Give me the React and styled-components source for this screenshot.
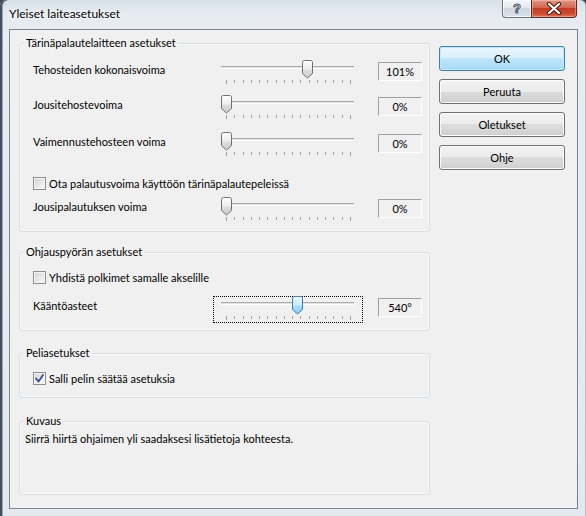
import React from "react";
import styled, { createGlobalStyle } from "styled-components";

const GlobalStyle = createGlobalStyle`
  html, body { margin: 0; padding: 0; }
  body {
    width: 586px;
    height: 516px;
    overflow: hidden;
    font-family: Lato, "Liberation Sans", sans-serif;
    font-size: 11px;
    color: #000;
    background: #3b4656;
  }
  * { box-sizing: border-box; }
`;

const Window = styled.div`
  width: 586px;
  height: 516px;
  display: flex;
  flex-direction: column;
  padding: 0 8px 7px 9px;
  background: linear-gradient(180deg, #d7dfe8 0px, #e6ebf1 14px, #e9edf2 40px, #e4e9ef 100%);
  box-shadow: inset 2px 0 0 #44505f, inset 3px 0 0 #9aa6b3, inset -1px 0 0 #b8c2cc;
  border-radius: 6px 6px 0 0;
`;

const TitleBar = styled.div`
  height: 29px;
  flex: none;
  display: flex;
  justify-content: space-between;
  align-items: flex-start;
`;

const Title = styled.div`
  padding-top: 6px;
  line-height: 16px;
  font-size: 12px;
  color: #000;
  text-shadow: 0 0 6px #fff, 0 0 3px #fff;
`;

const Captions = styled.div`
  display: flex;
  margin-right: 1px;
`;

const HelpButton = styled.div`
  width: 29px;
  height: 18px;
  border: 1px solid #6c7582;
  border-right: none;
  border-top: none;
  border-radius: 0 0 0 4px;
  background: linear-gradient(180deg, #f3f6f9 0%, #e4e9ef 45%, #cdd5de 50%, #dbe1e8 100%);
  box-shadow: inset 0 0 0 1px rgba(255,255,255,0.7);
  display: flex;
  align-items: center;
  justify-content: center;
  font-family: "Liberation Sans", sans-serif;
  font-weight: bold;
  font-size: 13px;
  color: #f4f4f4;
  -webkit-text-stroke: 1px #555d66;
`;

const CloseButton = styled.div`
  width: 46px;
  height: 18px;
  border: 1px solid #5b2a24;
  border-top: none;
  border-radius: 0 0 4px 0;
  background: linear-gradient(180deg, #e39683 0%, #d4674f 45%, #c23d26 50%, #cc4a30 80%, #db7a5c 100%);
  box-shadow: inset 0 0 0 1px rgba(255,220,210,0.4);
  display: flex;
  align-items: center;
  justify-content: center;
`;

const Client = styled.div`
  flex: 1;
  display: flex;
  gap: 9px;
  padding: 6px 12px 13px 9px;
  background: #f0f0f0;
  border: 1px solid #7c8590;
`;

const LeftCol = styled.div`
  width: 411px;
  flex: none;
  display: flex;
  flex-direction: column;
`;

const ButtonCol = styled.div`
  width: 126px;
  flex: none;
  display: flex;
  flex-direction: column;
  gap: 8px;
  padding-top: 10px;
`;

const Button = styled.div`
  height: 25px;
  flex: none;
  border: 1px solid ${(p) => (p.$default ? "#3c7fb1" : "#707070")};
  border-radius: 3px;
  background: ${(p) =>
    p.$default
      ? "linear-gradient(180deg, #eaf6fd 0%, #d9f0fc 50%, #bee6fd 50%, #a7d9f5 100%)"
      : "linear-gradient(180deg, #f2f2f2 0%, #ebebeb 50%, #dddddd 50%, #cfcfcf 100%)"};
  box-shadow: inset 0 0 0 1px ${(p) => (p.$default ? "#c6e8f8" : "#fbfbfb")};
  display: flex;
  align-items: center;
  justify-content: center;
  font-size: 11px;
  color: #000;
`;

const GroupBox = styled.fieldset`
  margin: ${(p) => p.$mt || 0}px 0 0 0;
  padding: ${(p) => p.$pt}px 6px ${(p) => p.$pb}px 13px;
  border: 1px solid #d5dfe5;
  border-radius: 3px;
  min-width: 0;
  box-shadow: inset 0 0 0 1px rgba(255, 255, 255, 0.5);
  ${(p) => (p.$grow ? "flex: 1;" : "")}
`;

const Legend = styled.legend`
  padding: 0 2px;
  margin-left: -9px;
  line-height: 14px;
  font-size: 11px;
  color: #000;
`;

const SliderRow = styled.div`
  display: flex;
  align-items: flex-start;
  margin-top: ${(p) => p.$mt || 0}px;
`;

const RowLabel = styled.div`
  width: 180px;
  flex: none;
  line-height: 20px;
  white-space: nowrap;
`;

const SliderBox = styled.div`
  position: relative;
  width: 150px;
  height: 27px;
  flex: none;
  border: 1px ${(p) => (p.$focused ? "dotted #000" : "solid transparent")};
`;

const Track = styled.div`
  position: absolute;
  left: 7px;
  right: 8px;
  top: 5px;
  height: 3px;
  border-top: 1px solid #a9a9a9;
  border-bottom: 1px solid #ffffff;
  background: #e3e3e3;
`;

const TickSvg = styled.svg`
  position: absolute;
  left: 0;
  top: 19px;
`;

const ThumbSvg = styled.svg`
  position: absolute;
  top: -1px;
`;

const ValueBox = styled.div`
  width: 44px;
  height: 19px;
  flex: none;
  margin-left: 15px;
  margin-top: 2px;
  border: 1px solid;
  border-color: #a0a0a0 #ffffff #ffffff #a0a0a0;
  line-height: 17px;
  text-align: center;
  font-size: 11px;
`;

const CheckRow = styled.div`
  display: flex;
  align-items: center;
  gap: 3px;
  height: 16px;
  margin-top: ${(p) => p.$mt || 0}px;
  white-space: nowrap;
`;

const CheckBoxBox = styled.div`
  width: 13px;
  height: 13px;
  flex: none;
  border: 1px solid #8e8f8f;
  background: linear-gradient(135deg, #d2d2d2 0%, #e9e9e9 55%, #fbfbfb 100%);
  box-shadow: inset 0 0 0 1px #f4f4f4;
  display: flex;
  align-items: center;
  justify-content: center;
`;

const Description = styled.div`
  margin-left: -8px;
  line-height: 16px;
`;

const TICKS = 16;
const T0 = 12;
const T1 = 136;

function Slider({ value, focused }) {
  const cx = T0 + value * (T1 - T0);
  const ticks = [];
  for (let i = 0; i < TICKS; i++) {
    const x = Math.round(T0 + (i * (T1 - T0)) / (TICKS - 1)) + 0.5;
    const end = i === 0 || i === TICKS - 1;
    ticks.push(<line key={i} x1={x} x2={x} y1={0} y2={end ? 4 : 3} stroke="#a3a3a3" strokeWidth="1" />);
  }
  const blue = focused;
  return (
    <SliderBox $focused={focused}>
      <Track />
      <TickSvg width="150" height="6">{ticks}</TickSvg>
      <ThumbSvg width="11" height="19" viewBox="0 0 11 19" style={{ left: Math.round(cx - 5.5) }}>
        <defs>
          <linearGradient id={blue ? "thb" : "thg"} x1="0" y1="0" x2="0" y2="1">
            <stop offset="0" stopColor={blue ? "#e8f6fd" : "#fdfdfd"} />
            <stop offset="0.5" stopColor={blue ? "#c9eafb" : "#ececec"} />
            <stop offset="0.55" stopColor={blue ? "#a9dbf6" : "#dcdcdc"} />
            <stop offset="1" stopColor={blue ? "#8fcdf0" : "#cfcfcf"} />
          </linearGradient>
        </defs>
        <path
          d="M0.5 2.5 Q0.5 0.5 2.5 0.5 H8.5 Q10.5 0.5 10.5 2.5 V13.5 L5.5 18 L0.5 13.5 Z"
          fill={`url(#${blue ? "thb" : "thg"})`}
          stroke={blue ? "#3c7fb1" : "#707070"}
          strokeWidth="1"
        />
        <path d="M1.5 2.5 Q1.5 1.5 2.5 1.5 H8.5 Q9.5 1.5 9.5 2.5" fill="none" stroke="#fff" strokeWidth="1" opacity="0.8" />
      </ThumbSvg>
    </SliderBox>
  );
}

function CheckBox({ checked, label, mt }) {
  return (
    <CheckRow $mt={mt}>
      <CheckBoxBox>
        {checked && (
          <svg width="9" height="9" viewBox="0 0 9 9">
            <path d="M1 4.5 L3.5 7.5 L8 1" fill="none" stroke="#2f4f9a" strokeWidth="1.8" strokeLinecap="round" strokeLinejoin="round" />
          </svg>
        )}
      </CheckBoxBox>
      <span>{label}</span>
    </CheckRow>
  );
}

function Row({ label, value, text, focused, mt }) {
  return (
    <SliderRow $mt={mt}>
      <RowLabel>{label}</RowLabel>
      <Slider value={value} focused={focused} />
      <ValueBox>{text}</ValueBox>
    </SliderRow>
  );
}

export default function App() {
  return (
    <>
      <GlobalStyle />
      <Window>
        <TitleBar>
          <Title>Yleiset laiteasetukset</Title>
          <Captions>
            <HelpButton>?</HelpButton>
            <CloseButton>
              <svg width="16" height="13" viewBox="0 0 16 13">
                <path d="M3 2 L13 11 M13 2 L3 11" stroke="#4a1a12" strokeWidth="4.2" strokeLinecap="round" />
                <path d="M3 2 L13 11 M13 2 L3 11" stroke="#ffffff" strokeWidth="2.2" strokeLinecap="round" />
              </svg>
            </CloseButton>
          </Captions>
        </TitleBar>
        <Client>
          <LeftCol>
            <GroupBox $pt={10} $pb={7}>
              <Legend>Tärinäpalautelaitteen asetukset</Legend>
              <Row label="Tehosteiden kokonaisvoima" value={0.661} text="101%" />
              <Row label="Jousitehostevoima" value={0} text="0%" mt={8} />
              <Row label="Vaimennustehosteen voima" value={0} text="0%" mt={10} />
              <CheckBox label="Ota palautusvoima käyttöön tärinäpalautepeleissä" mt={16} />
              <Row label="Jousipalautuksen voima" value={0} text="0%" mt={6} />
            </GroupBox>
            <GroupBox $mt={13} $pt={10} $pb={7}>
              <Legend>Ohjauspyörän asetukset</Legend>
              <CheckBox label="Yhdistä polkimet samalle akselille" />
              <Row label="Kääntöasteet" value={0.575} text="540°" focused mt={11} />
            </GroupBox>
            <GroupBox $mt={15} $pt={10} $pb={11}>
              <Legend>Peliasetukset</Legend>
              <CheckBox label="Salli pelin säätää asetuksia" checked />
            </GroupBox>
            <GroupBox $mt={16} $pt={3} $pb={4} $grow>
              <Legend>Kuvaus</Legend>
              <Description>Siirrä hiirtä ohjaimen yli saadaksesi lisätietoja kohteesta.</Description>
            </GroupBox>
          </LeftCol>
          <ButtonCol>
            <Button $default>OK</Button>
            <Button>Peruuta</Button>
            <Button>Oletukset</Button>
            <Button>Ohje</Button>
          </ButtonCol>
        </Client>
      </Window>
    </>
  );
}
